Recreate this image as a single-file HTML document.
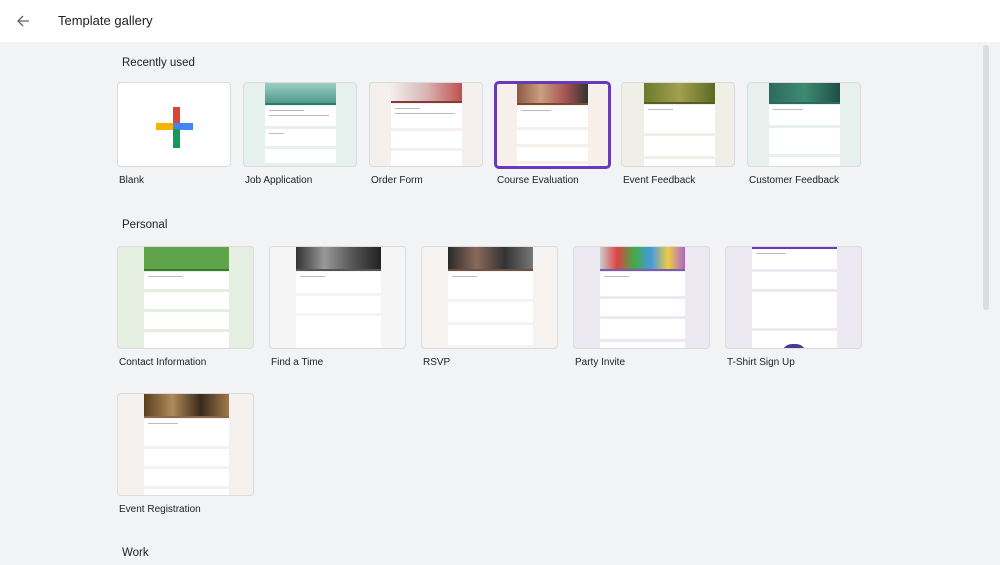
<!DOCTYPE html>
<html><head><meta charset="utf-8"><style>
*{margin:0;padding:0;box-sizing:border-box}
body{width:1000px;height:565px;overflow:hidden;background:#f1f3f4;font-family:"Liberation Sans",Arial,sans-serif;color:#202124;position:relative}
.top{position:absolute;left:0;top:0;width:1000px;height:42px;background:#fff}
.t{position:absolute;font-size:13px;color:#202124}
.card{position:absolute;border-radius:4px;border:1px solid #dadce0;overflow:hidden}
.col{position:absolute;top:0;bottom:0}
.hdr{width:100%}
.bar{height:2px;width:100%}
.blk{background:#fff;margin-top:3px;position:relative}
.blk i{position:absolute;left:4px;height:1px;background:#bbb;display:block}
.lbl{position:absolute;font-size:10px;color:#202124}
</style></head><body>
<div class="top">
<svg style="position:absolute;left:16px;top:14px" width="14" height="14" viewBox="0 0 14 14"><path d="M13 7H2M7 2L2 7l5 5" stroke="#5f6368" stroke-width="1.3" fill="none"/></svg>
<div class="t" style="left:58px;top:13px;font-size:13px">Template gallery</div>
</div>
<div style="position:absolute;left:983px;top:45px;width:6px;height:265px;background:#dadce0;border-radius:3px"></div>

<div class="t" style="left:122px;top:57px;font-size:11.5px">Recently used</div>
<div class="t" style="left:122px;top:219px;font-size:11.5px">Personal</div>
<div class="t" style="left:122px;top:547px;font-size:11.5px">Work</div>

<!-- Row 1 -->
<div class="card" style="left:117px;top:82px;width:114px;height:85px;background:#fff">
 <div style="position:absolute;left:55px;top:24px;width:7px;height:18px;background:#db4437"></div>
 <div style="position:absolute;left:38px;top:40px;width:18px;height:7px;background:#f4b400"></div>
 <div style="position:absolute;left:55px;top:40px;width:20px;height:7px;background:#4285f4"></div>
 <div style="position:absolute;left:55px;top:46px;width:7px;height:19px;background:#0f9d58"></div>
</div>
<div class="card" style="left:243px;top:82px;width:114px;height:85px;background:#e6f0ec">
 <div class="col" style="left:21px;width:71px"><div class="hdr" style="height:20px;background:linear-gradient(#9ccfc5,#4f9a8a)"></div><div class="bar" style="background:#2d7a6a"></div>
 <div class="blk" style="height:20px;margin-top:1px"><i style="top:4px;width:35px"></i><i style="top:9px;width:60px"></i></div><div class="blk" style="height:17px"><i style="top:4px;width:15px"></i></div><div class="blk" style="height:14px"></div><div class="blk" style="height:14px"></div></div>
</div>
<div class="card" style="left:369px;top:82px;width:114px;height:85px;background:#f5f0ee">
 <div class="col" style="left:21px;width:71px"><div class="hdr" style="height:18px;background:linear-gradient(90deg,#f3eeee,#d8b5b5,#c0504d)"></div><div class="bar" style="background:#8b3a33"></div>
 <div class="blk" style="height:24px;margin-top:1px"><i style="top:4px;width:25px"></i><i style="top:9px;width:60px"></i></div><div class="blk" style="height:17px"></div><div class="blk" style="height:18px"></div></div>
</div>
<div class="card" style="left:494px;top:81px;width:117px;height:88px;background:#f7efea;border:3px solid #673ab7;border-radius:5px">
 <div class="col" style="left:20px;width:71px"><div class="hdr" style="height:19px;background:linear-gradient(90deg,#8b5a44,#c9a080,#a55,#333)"></div><div class="bar" style="background:#7a4a2e"></div>
 <div class="blk" style="height:21px;margin-top:1px"><i style="top:4px;width:30px"></i></div><div class="blk" style="height:14px"></div><div class="blk" style="height:14px"></div><div class="blk" style="height:10px"></div></div>
</div>
<div class="card" style="left:621px;top:82px;width:114px;height:85px;background:#f0efe7">
 <div class="col" style="left:22px;width:71px"><div class="hdr" style="height:19px;background:linear-gradient(90deg,#6b7a2c,#a3a050,#5a6a20)"></div><div class="bar" style="background:#5b5a2b"></div>
 <div class="blk" style="height:28px;margin-top:1px"><i style="top:4px;width:25px"></i></div><div class="blk" style="height:20px"></div><div class="blk" style="height:12px"></div></div>
</div>
<div class="card" style="left:747px;top:82px;width:114px;height:85px;background:#e8f0ee">
 <div class="col" style="left:21px;width:71px"><div class="hdr" style="height:19px;background:linear-gradient(90deg,#2d6a5e,#3f8a70,#1e4f47)"></div><div class="bar" style="background:#2a6a60"></div>
 <div class="blk" style="height:20px;margin-top:1px"><i style="top:4px;width:30px"></i></div><div class="blk" style="height:26px"></div><div class="blk" style="height:14px"></div></div>
</div>
<div class="lbl" style="left:119px;top:175px">Blank</div>
<div class="lbl" style="left:245px;top:175px">Job Application</div>
<div class="lbl" style="left:371px;top:175px">Order Form</div>
<div class="lbl" style="left:497px;top:175px">Course Evaluation</div>
<div class="lbl" style="left:623px;top:175px">Event Feedback</div>
<div class="lbl" style="left:749px;top:175px">Customer Feedback</div>

<!-- Row 2 -->
<div class="card" style="left:117px;top:246px;width:137px;height:103px;background:#e4efe1">
 <div class="col" style="left:26px;width:85px"><div class="hdr" style="height:22px;background:#5fa44a"></div><div class="bar" style="background:#3a7a2a"></div>
 <div class="blk" style="height:17px;margin-top:1px"><i style="top:4px;width:35px"></i></div><div class="blk" style="height:17px"></div><div class="blk" style="height:17px"></div><div class="blk" style="height:17px"></div></div>
</div>
<div class="card" style="left:269px;top:246px;width:137px;height:103px;background:#f5f5f6">
 <div class="col" style="left:26px;width:85px"><div class="hdr" style="height:22px;background:linear-gradient(90deg,#333,#999,#555,#222)"></div><div class="bar" style="background:#555"></div>
 <div class="blk" style="height:21px;margin-top:1px"><i style="top:4px;width:25px"></i></div><div class="blk" style="height:17px"></div><div class="blk" style="height:40px"></div></div>
</div>
<div class="card" style="left:421px;top:246px;width:137px;height:103px;background:#f5f2f0">
 <div class="col" style="left:26px;width:85px"><div class="hdr" style="height:22px;background:linear-gradient(90deg,#2a2a2a,#8a6a5a,#333,#777)"></div><div class="bar" style="background:#6b5244"></div>
 <div class="blk" style="height:27px;margin-top:1px"><i style="top:4px;width:25px"></i></div><div class="blk" style="height:20px"></div><div class="blk" style="height:20px"></div></div>
</div>
<div class="card" style="left:573px;top:246px;width:137px;height:103px;background:#ece9f2">
 <div class="col" style="left:26px;width:85px"><div class="hdr" style="height:22px;background:linear-gradient(90deg,#ccc,#d44,#4a4,#49d,#ec4,#a6c)"></div><div class="bar" style="background:#7a5ea8"></div>
 <div class="blk" style="height:24px;margin-top:1px"><i style="top:4px;width:25px"></i></div><div class="blk" style="height:17px"></div><div class="blk" style="height:20px"></div><div class="blk" style="height:10px"></div></div>
</div>
<div class="card" style="left:725px;top:246px;width:137px;height:103px;background:#ece9f2">
 <div class="col" style="left:26px;width:85px"><div class="bar" style="background:#673ab7"></div>
 <div class="blk" style="height:20px;margin-top:0"><i style="top:4px;width:30px"></i></div><div class="blk" style="height:17px"></div><div class="blk" style="height:36px"></div><div class="blk" style="height:20px"><div style="position:absolute;left:30px;top:13px;width:24px;height:10px;border-radius:12px 12px 0 0;background:#4a3a8a"></div></div></div>
</div>
<div class="lbl" style="left:119px;top:357px">Contact Information</div>
<div class="lbl" style="left:271px;top:357px">Find a Time</div>
<div class="lbl" style="left:423px;top:357px">RSVP</div>
<div class="lbl" style="left:575px;top:357px">Party Invite</div>
<div class="lbl" style="left:727px;top:357px">T-Shirt Sign Up</div>

<!-- Row 3 -->
<div class="card" style="left:117px;top:393px;width:137px;height:103px;background:#f5f1ee">
 <div class="col" style="left:26px;width:85px"><div class="hdr" style="height:22px;background:linear-gradient(90deg,#5a4020,#b08a5a,#3a2a1a,#a07a4a)"></div><div class="bar" style="background:#8a6a4a"></div>
 <div class="blk" style="height:27px;margin-top:1px"><i style="top:4px;width:30px"></i></div><div class="blk" style="height:17px"></div><div class="blk" style="height:17px"></div><div class="blk" style="height:10px"></div></div>
</div>
<div class="lbl" style="left:119px;top:504px">Event Registration</div>
</body></html>
